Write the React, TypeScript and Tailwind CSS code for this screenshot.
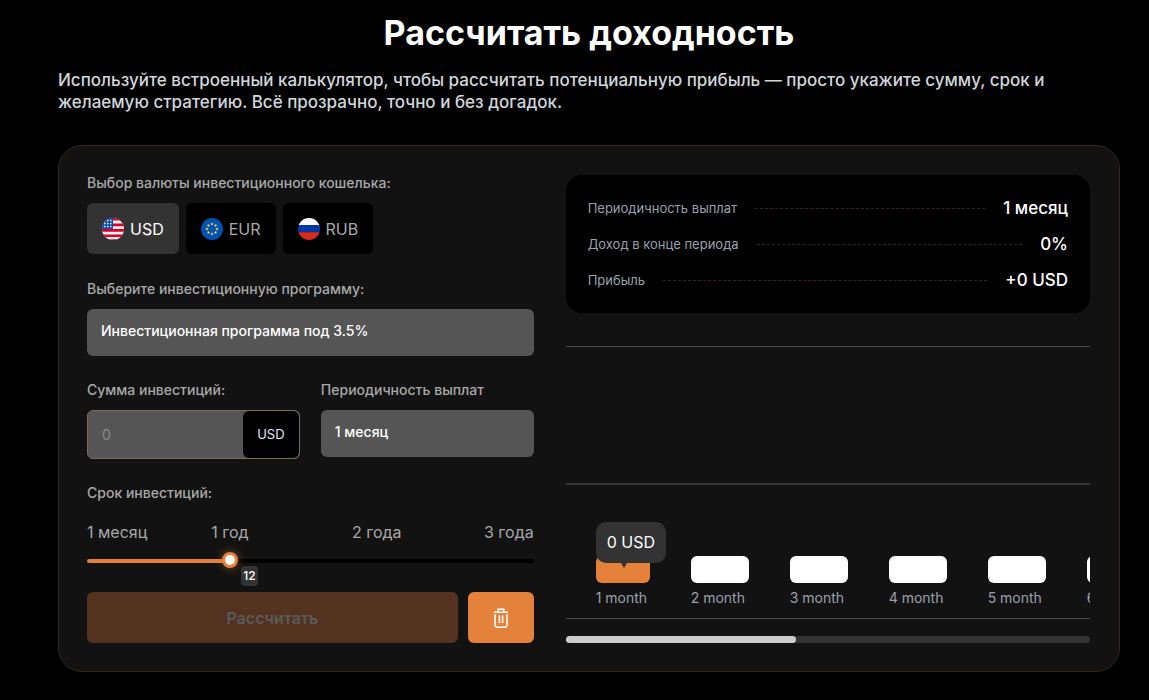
import { useState } from 'react';
import clsx from 'clsx';

const currencies = ['USD', 'EUR', 'RUB'] as const;
type Currency = (typeof currencies)[number];

const months = [1, 2, 3, 4, 5, 6, 7, 8, 9, 10, 11, 12];

function UsFlag() {
  return (
    <svg viewBox="0 0 22 22" className="size-[22px]" aria-hidden="true">
      <clipPath id="us">
        <circle cx="11" cy="11" r="11" />
      </clipPath>
      <g clipPath="url(#us)">
        <rect width="22" height="22" fill="#f0f0f0" />
        <path d="M0 0h22v2.5H0zM0 5.4h22v2.8H0zM0 11h22v2.8H0zM0 16.6h22V19H0zM0 21.3h22v1H0z" fill="#d80027" />
        <rect width="11" height="11" fill="#0052b4" />
        <g fill="#f0f0f0">
          {[2.4, 5.4, 8.4].map((y) =>
            [2, 5, 8].map((x) => <rect key={`${x}-${y}`} x={x} y={y - 0.6} width="1.5" height="1.5" />),
          )}
        </g>
      </g>
    </svg>
  );
}

function EuFlag() {
  return (
    <svg viewBox="0 0 22 22" className="size-[22px]" aria-hidden="true">
      <circle cx="11" cy="11" r="11" fill="#0052b4" />
      <g fill="#ffda44">
        {[0, 45, 90, 135, 180, 225, 270, 315].map((angle) => (
          <path
            key={angle}
            d="M11 4.2l.45 1.25 1.3.03-1.04.8.38 1.25L11 6.78l-1.09.75.38-1.25-1.04-.8 1.3-.03z"
            transform={`rotate(${angle} 11 11)`}
          />
        ))}
      </g>
    </svg>
  );
}

function RuFlag() {
  return (
    <svg viewBox="0 0 22 22" className="size-[22px]" aria-hidden="true">
      <clipPath id="ru">
        <circle cx="11" cy="11" r="11" />
      </clipPath>
      <g clipPath="url(#ru)">
        <rect width="22" height="7.2" fill="#fff" />
        <rect y="7.2" width="22" height="7" fill="#0039a6" />
        <rect y="14.2" width="22" height="8" fill="#d52b1e" />
      </g>
    </svg>
  );
}

const flags = { USD: UsFlag, EUR: EuFlag, RUB: RuFlag };

function TrashIcon() {
  return (
    <svg viewBox="0 0 16 20" className="h-5 w-4" fill="none" stroke="#fff" strokeWidth="1.6" aria-hidden="true">
      <path d="M.8 4.2h14.4M5.2 4V1.3h5.6V4" />
      <path d="M2 6.2V17a2.2 2.2 0 0 0 2.2 2.2h7.6A2.2 2.2 0 0 0 14 17V6.2" />
      <path d="M6.4 7.5v7.5M9.6 7.5v7.5" />
    </svg>
  );
}

const labelClass = 'mb-2.5 block text-sm leading-5 font-medium text-[#a9a9a9]';
const selectClass =
  'h-[47px] w-full appearance-none rounded-md bg-[#555] px-3.5 pb-1 text-sm font-medium text-white outline-none';

function SummaryRow({ name, value }: { name: string; value: string }) {
  return (
    <div className="flex items-center gap-[18px]">
      <dt className="text-[13px] leading-7 text-[#99a1af]">{name}</dt>
      <div className="flex-1 border-t border-dashed border-[#3a2413]" />
      <dd className="text-[17px] leading-7 font-medium text-white">{value}</dd>
    </div>
  );
}

export default function App() {
  const [currency, setCurrency] = useState<Currency>('USD');
  const [amount, setAmount] = useState('');
  const [term, setTerm] = useState(12);
  const [activeMonth, setActiveMonth] = useState(1);

  const ratio = (term - 1) / 35;
  const thumbCenter = `calc(8px + (100% - 16px) * ${ratio})`;

  return (
    <main className="min-h-screen bg-black pt-3 pr-[29px] pb-7 pl-[58px] font-['Inter',sans-serif]">
      <h1 className="text-center text-[34px] leading-[42px] font-bold text-white">Рассчитать доходность</h1>
      <p className="mt-[15px] text-[17px] leading-[22px] font-medium text-[#d1d5dc]">
        Используйте встроенный калькулятор, чтобы рассчитать потенциальную прибыль — просто укажите сумму, срок и
        желаемую стратегию. Всё прозрачно, точно и без догадок.
      </p>

      <section className="mt-8 grid grid-cols-[46fr_54fr] gap-8 rounded-3xl border border-[#35281b] bg-[#121212] pt-[27px] pr-[29px] pb-7 pl-7">
        <form className="min-w-0" onSubmit={(e) => e.preventDefault()}>
          <span className={labelClass}>Выбор валюты инвестиционного кошелька:</span>
          <div className="flex gap-[7px]">
            {currencies.map((item) => {
              const Flag = flags[item];
              return (
                <button
                  key={item}
                  type="button"
                  onClick={() => setCurrency(item)}
                  className={clsx(
                    'flex h-[51px] items-center gap-1.5 rounded-md px-[15px] text-base',
                    item === currency ? 'bg-[#333] text-white' : 'bg-black text-[#a9a9a9]',
                  )}
                >
                  <Flag />
                  {item}
                </button>
              );
            })}
          </div>

          <div className="mt-[25px]">
            <label htmlFor="program" className={labelClass}>
              Выберите инвестиционную программу:
            </label>
            <select id="program" className={selectClass}>
              <option>Инвестиционная программа под 3.5%</option>
            </select>
          </div>

          <div className="mt-6 grid grid-cols-2 gap-[21px]">
            <div>
              <label htmlFor="amount" className={labelClass}>
                Сумма инвестиций:
              </label>
              <div className="flex h-[49px] rounded-md border border-[#7f6a52] bg-[#555]">
                <input
                  id="amount"
                  value={amount}
                  onChange={(e) => setAmount(e.target.value)}
                  placeholder="0"
                  className="min-w-0 flex-1 px-3.5 text-sm text-white outline-none placeholder:text-[#8a8a8a]"
                />
                <span className="flex w-14 items-center justify-center rounded-md bg-black text-[13px] text-[#e0e7ff]">
                  {currency}
                </span>
              </div>
            </div>
            <div>
              <label htmlFor="period" className={labelClass}>
                Периодичность выплат
              </label>
              <select id="period" className={selectClass}>
                <option>1 месяц</option>
              </select>
            </div>
          </div>

          <div className="mt-6">
            <label htmlFor="term" className={labelClass}>
              Срок инвестиций:
            </label>
            <div className="mt-[19px] grid grid-cols-[70fr_146fr_148fr_83fr] text-base leading-5 whitespace-nowrap text-[#a9a9a9]">
              <span>1 месяц</span>
              <span className="text-center">1 год</span>
              <span className="text-center">2 года</span>
              <span className="text-right">3 года</span>
            </div>
            <div className="relative mt-[9px]">
              <input
                id="term"
                type="range"
                min={1}
                max={36}
                value={term}
                onChange={(e) => setTerm(Number(e.target.value))}
                className="block h-5 w-full appearance-none bg-transparent outline-none [&::-webkit-slider-runnable-track]:h-1 [&::-webkit-slider-runnable-track]:rounded-full [&::-webkit-slider-runnable-track]:bg-[image:var(--track)] [&::-webkit-slider-thumb]:-mt-[7px] [&::-webkit-slider-thumb]:size-4 [&::-webkit-slider-thumb]:appearance-none [&::-webkit-slider-thumb]:rounded-full [&::-webkit-slider-thumb]:border-3 [&::-webkit-slider-thumb]:border-[#e4813a] [&::-webkit-slider-thumb]:bg-white [&::-webkit-slider-thumb]:shadow-[0_0_10px_rgba(228,129,58,0.5)]"
                style={
                  {
                    '--track': `linear-gradient(to right, #e4813a ${thumbCenter}, #000 ${thumbCenter})`,
                  } as React.CSSProperties
                }
              />
              <output
                htmlFor="term"
                className="absolute top-[15px] ml-[11px] rounded-sm bg-[#333] px-[2px] text-xs leading-5 font-medium text-white"
                style={{ left: thumbCenter }}
              >
                {term}
              </output>
            </div>
          </div>

          <div className="mt-[21px] flex gap-2.5">
            <button
              type="submit"
              disabled
              className="h-[51px] flex-1 rounded-md bg-[#53331f] text-base font-semibold text-[#5a5a5a]"
            >
              Рассчитать
            </button>
            <button
              type="button"
              aria-label="Очистить"
              onClick={() => setAmount('')}
              className="flex h-[51px] w-[66px] items-center justify-center rounded-md bg-[#e4813a]"
            >
              <TrashIcon />
            </button>
          </div>
        </form>

        <div className="min-w-0 pt-0.5">
          <dl className="flex flex-col gap-2 rounded-2xl bg-black px-[22px] py-[19px]">
            <SummaryRow name="Периодичность выплат" value="1 месяц" />
            <SummaryRow name="Доход в конце периода" value="0%" />
            <SummaryRow name="Прибыль" value={`+0 ${currency}`} />
          </dl>

          <div className="mt-[33px] border-y border-[#4c4c4c]">
            <div className="h-[138px] border-b-2 border-[#333]" />
            <div className="flex gap-[41px] overflow-x-auto px-[30px] pt-[71px] pb-2.5 [scrollbar-width:none]">
              {months.map((month) => (
                <button
                  key={month}
                  type="button"
                  onClick={() => setActiveMonth(month)}
                  className={clsx('relative shrink-0', month === 1 ? 'w-[54px]' : 'w-[58px]')}
                >
                  <span
                    className={clsx('block h-[27px] rounded-md', month === activeMonth ? 'bg-[#e4813a]' : 'bg-white')}
                  />
                  {month === activeMonth && (
                    <span className="absolute bottom-full left-0 -mb-[7px] rounded-[10px] bg-[#333] px-[11px] text-base leading-[41px] whitespace-nowrap text-white">
                      0 {currency}
                      <span className="absolute top-full left-[25px] border-x-3 border-t-5 border-transparent border-t-[#333]" />
                    </span>
                  )}
                  <span className="mt-[5px] block text-left text-sm leading-5 whitespace-nowrap text-[#99a1af]">
                    {month} month
                  </span>
                </button>
              ))}
            </div>
          </div>
          <div className="mt-[17px] h-[7px] rounded-full bg-[#333]">
            <div className="h-full w-[44%] rounded-full bg-[#ccc]" />
          </div>
        </div>
      </section>
    </main>
  );
}
